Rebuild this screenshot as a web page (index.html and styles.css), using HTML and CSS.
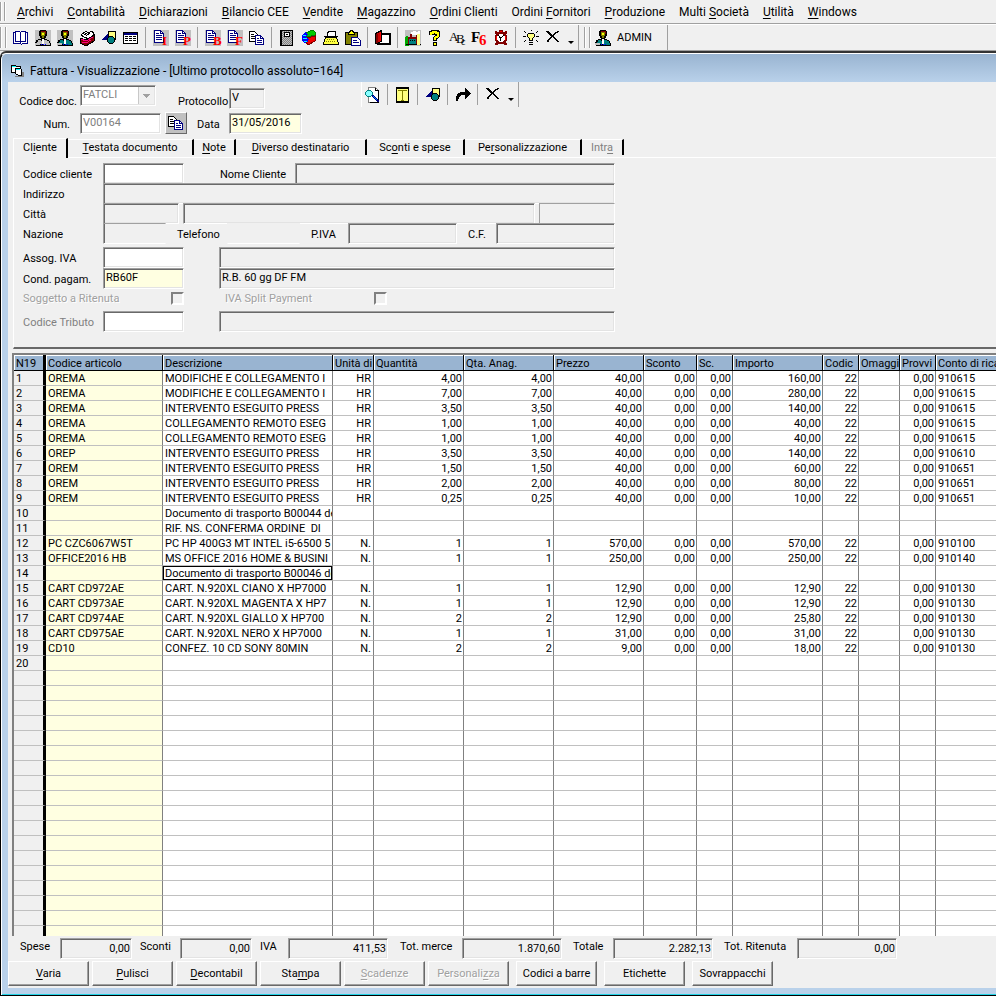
FILE: index.html
```html
<!DOCTYPE html>
<html lang="it">
<head>
<meta charset="utf-8">
<title>Fattura - Visualizzazione</title>
<link rel="stylesheet" href="styles.css">
</head>
<body>
<svg class="defs" aria-hidden="true">
  <defs>
    <pattern id="greydots" width="2" height="2" patternUnits="userSpaceOnUse"><path fill="#c0c0c0" d="M0 0h2v2H0z"/><path fill="#808080" d="M0 0h1v1H0zM1 1h1v1H1z"/></pattern>
    <symbol id="user" viewBox="0 0 16 16">
      <path fill="#000" d="M5 0h6v1h1v5h-1v2h-1v1h2v1h2v1h1v2h1v3H1v-1H0v-3h1v-2h2V9h3V8H5V6H4V1h1z"/>
      <path fill="#808000" d="M6 2h4v4H9v2H7V6H6z"/><path fill="#ff0" d="M7 3h2v2H7z"/><path fill="#800000" d="M6 1h5v1H6zM10 2h1v2h-1z"/>
      <path d="M3 10h3v1h1v3H2v-2h1zM9 10h3v1h2v2h1v2H9z"/><path fill="#fff" d="M7 9h2v5H7z"/>
      <path fill="#c0c0c0" d="M0 13h5v2H0z"/><path fill="#00f" d="M6 14h1v1H6zM8 14h1v1H8zM10 14h1v1h-1z"/>
    </symbol>
    <symbol id="sheet" viewBox="0 0 16 16">
      <path fill="#c0c0c0" d="M0 0h16v16H0z"/><path fill="#fff" stroke="#000080" d="M1.500 .5h6l3 3v9h-9z"/><path fill="none" stroke="#000080" d="M7.500 .5v3h3M3 3.500h3M3 5.500h6M3 7.500h6M3 9.500h6"/>
    </symbol>
    <symbol id="copy" viewBox="0 0 16 16">
      <path fill="#fff" stroke="#000" d="M.5 1.500h5l3 3v7h-8z"/><path stroke="#000" fill="none" d="M2 4.500h3M2 6.500h5M2 8.500h5"/>
      <path fill="#fff" stroke="#000080" d="M6.500 5.500h5l3 3v6h-8z"/><path fill="none" stroke="#000080" d="M11.500 5.500v3h3M8 8.500h2M8 10.500h5M8 12.500h5"/>
    </symbol>
    <symbol id="shapes" viewBox="0 0 16 16">
      <path fill="#ffff80" stroke="#000" d="M7.500 1.500h7v8h-7z"/><path fill="#000080" d="M0 10l1-1h1V8h1V7h1V6h1V5h1V4h1v6z"/><path fill="#000" d="M8 6h4v1h1v1h1v4h-1v1h-1v1H8v-1H7v-1H6V8h1V7h1z"/><path fill="#008080" d="M8 7h4v1h1v4h-1v1H8v-1H7V8h1z"/>
    </symbol>
    <symbol id="cross" viewBox="0 0 16 16"><path fill="#000" d="M1 1h3v1h1v1h1v1h1v1h1V4h1V3h1V2h2V1h2v1h-1v1h-2v1h-1v1H9v2h1v1h1v1h1v1h1v1h1v1h-2v-1h-1v-1h-1V9H9V8H8V7H7v1H6v1H5v1H4v2H2v-2h1V9h1V8h1V7h1V6H5V5H4V4H3V3H2V2H1z"/></symbol>
  </defs>
</svg>
<header>
  <nav class="menu">
    <i class="grip"></i>
    <a href="#"><u>A</u>rchivi</a><a href="#"><u>C</u>ontabilità</a><a href="#"><u>D</u>ichiarazioni</a><a href="#"><u>B</u>ilancio CEE</a><a href="#"><u>V</u>endite</a><a href="#"><u>M</u>agazzino</a><a href="#"><u>O</u>rdini Clienti</a><a href="#">Ordini <u>F</u>ornitori</a><a href="#"><u>P</u>roduzione</a><a href="#">Multi <u>S</u>ocietà</a><a href="#"><u>U</u>tilità</a><a href="#"><u>W</u>indows</a>
  </nav>
  <div class="toolbar">
    <i class="grip"></i>
    <button aria-label="Libro"><svg viewBox="0 0 16 16"><path fill="#fff" stroke="#000080" d="M.5 2.500h2v-1h4l1 1 1-1h4v1h2v11h-5l-1 1-1-1h-7zM7.500 3v10"/><path fill="none" stroke="#000080" d="M2.500 3v8h4l1 1 1-1h4V3"/></svg></button>
    <button aria-label="Clienti"><svg class="boxed grey"><use href="#user"/></svg></button>
    <button aria-label="Fornitori"><svg class="boxed teal"><use href="#user"/></svg></button>
    <button aria-label="Schedario"><svg viewBox="0 0 16 16"><path fill="#fff" stroke="#000" d="M2 5 7 1l2 2 4-2 2 3-5 5-5-2z"/><path fill="#800000" stroke="#000" d="M1 8l6 2 8-5v6l-8 5-6-3z"/><path fill="none" stroke="#ff0080" d="M2 9l5 2 7-4M3 12l4 1 5-3"/><path fill="none" stroke="#000" d="M5 5l3-2M7 6l4-3"/></svg></button>
    <button aria-label="Forme"><svg><use href="#shapes"/></svg></button>
    <button aria-label="Tabella"><svg viewBox="0 0 16 16"><path fill="#fff" stroke="#000" d="M.5 2.500h14v11H.5z"/><path fill="#000080" d="M1 3h13v2H1z"/><path stroke="#000" stroke-dasharray="3 1" d="M2 6.500h12M2 8.500h12M2 10.500h12"/></svg></button>
    <i class="sep"></i>
    <button aria-label="Documento I"><svg viewBox="0 0 16 16"><use href="#sheet"/><text x="9" y="15">I</text></svg></button>
    <button aria-label="Documento P"><svg viewBox="0 0 16 16"><use href="#sheet"/><text x="8" y="15">P</text></svg></button>
    <i class="sep"></i>
    <button aria-label="Documento B"><svg viewBox="0 0 16 16"><use href="#sheet"/><text x="8" y="15">B</text></svg></button>
    <button aria-label="Documento F"><svg viewBox="0 0 16 16"><use href="#sheet"/><text x="8" y="15">F</text></svg></button>
    <button aria-label="Copia"><svg><use href="#copy"/></svg></button>
    <i class="sep"></i>
    <button aria-label="Archivio"><svg viewBox="0 0 16 16"><path fill="url(#greydots)" stroke="#000" d="M1.500 .5h12v15h-12z"/><path fill="#000" d="M2 1h1v14H2z"/><path fill="#fff" stroke="#000" d="M5.500 2.500h5v4h-5z"/><path fill="#000" d="M7 4h2v1H7z"/></svg></button>
    <button aria-label="Libri"><svg viewBox="0 0 16 16"><path fill="#0c0" stroke="#008000" d="M4 3l8-3 2 2v3l-8 2z"/><path fill="#e00" stroke="#800000" d="M6 8l8-2v5l-7 4-2-3z"/><path fill="#00f" d="M1 5l3-3 3 2-2 3 3 2-1 3-4 1-2-3z"/><path fill="none" stroke="#0ff" d="M2 6l3-1M2 9l4-1M3 12l3-1"/></svg></button>
    <button aria-label="Macchina da scrivere"><svg viewBox="0 0 16 16"><path fill="#fff" stroke="#000" d="M4.500 6.500v-4h1v-1h7v5z"/><path fill="#ff4" stroke="#000" d="M2.500 7.500h11l2 6v1H.5v-1z"/><path fill="none" stroke="#000" d="M1 6.500h14"/><path stroke="#808000" stroke-dasharray="1 1" d="M4 9.500h8M3 11.500h10"/></svg></button>
    <button aria-label="Incolla"><svg viewBox="0 0 16 16"><path fill="#808000" stroke="#000" d="M.5 2.500h12v12H.5z"/><path fill="#ff0" stroke="#000" d="M3.500 4.500v-2h1l1-2h2l1 2h1v2z"/><path fill="#fff" stroke="#000080" d="M6.500 7.500h6l3 3v5h-9z"/><path stroke="#000080" d="M8 10.500h4M8 12.500h6"/></svg></button>
    <i class="sep"></i>
    <button aria-label="Esci"><svg viewBox="0 0 16 16"><path fill="#fff" stroke="#000" stroke-width="2" d="M3 4h12v10H3z"/><path fill="#c00" stroke="#000" d="M.5 3.500l6-3v11l-6 2z"/><path fill="#800000" d="M1 4h2v9H1z"/><path fill="#f00" d="M5 2h1v9H5z"/></svg></button>
    <i class="sep"></i>
    <button aria-label="Fabbrica"><svg viewBox="0 0 16 16"><path fill="#c0c0c0" d="M0 0h16v16H0z"/><path fill="#fff" d="M6 2h2V1h3v1h2V1h2v3h-3v1H6z"/><path fill="#0a0" d="M0 7h1V6h2v2h1v8H0z"/><path fill="#800000" d="M3 7h2V4h2v3h4V5h2v9H3z"/><path fill="#008080" d="M4 9h7v5H4z"/><path fill="#000" d="M5 10h1v1H5zM7 10h1v1H7zM9 10h1v1H9zM1 14h15v1H1z"/><path fill="#ff8" d="M12 4h3v11h-3z"/></svg></button>
    <button aria-label="Aiuto"><svg viewBox="0 0 16 16"><path fill="none" stroke="#000" stroke-width="4" d="M4 5V3h2V2h4v1h1v3L8 8v3"/><path fill="none" stroke="#ff0" stroke-width="2" d="M4 5V3h2V2h3v1h2v3L8 8v2"/><path fill="#ff0" stroke="#000" d="M6.500 12.500h3v3h-3z"/></svg></button>
    <button aria-label="Caratteri"><svg viewBox="0 0 16 16"><text class="ink" x="0" y="11">A</text><text class="ink" x="7" y="13">B</text><text class="ink small" x="12" y="15">c</text></svg></button>
    <button aria-label="F6"><svg viewBox="0 0 16 16"><text class="ink big" x="0" y="12">F</text><text class="big" x="8" y="15">6</text></svg></button>
    <button aria-label="Sveglia"><svg viewBox="0 0 16 16"><path fill="#800000" d="M6 0h4v2h2V1h2v3h-1v1h1v6h-1v2h1v2h-3v-1H5v1H2v-2h1v-2H2V5h1V4H2V1h2v1h2z"/><path fill="#fff" d="M6 4h4v1h1v1h1v4h-1v1h-1v1H6v-1H5v-1H4V6h1V5h1z"/><path fill="#f00" d="M7 1h2v1H7zM3 6h1v4H3zM12 6h1v4h-1z"/><path fill="#000" d="M5 5h1v1h1v1h2V6h1V5h1v1h-1v1H9v1H8v3H7V8H6V6H5z"/></svg></button>
    <i class="sep"></i>
    <button aria-label="Suggerimento"><svg viewBox="0 0 16 16"><path fill="#ffff80" stroke="#000" d="M6.500 10.500v-2l-2-2v-2l2-1.500h3l2 1.500v2l-2 2v2z"/><path stroke="#000" fill="none" d="M6 12.500h4M6 14.500h4M0 6.500h3M13 6.500h3M1 1l2 2M15 1l-2 2M1 12l2-2M15 12l-2-2M8 0v1"/></svg></button>
    <button aria-label="Chiudi"><svg><use href="#cross"/></svg></button>
    <button class="more" aria-label="Altro"></button>
    <i class="bar"></i><i class="grip"></i>
    <button class="admin"><svg class="teal"><use href="#user"/></svg>ADMIN</button>
    <i class="bar"></i>
  </div>
</header>
<main class="window">
  <h1 class="title"><svg viewBox="0 0 16 16"><path fill="#808080" d="M5 13h7V9h2v5H5z"/><path fill="#fff" stroke="#000" d="M1.500 2.500h4l1 1h4v7h-3l-2-1h-4z"/><path fill="#0ff" d="M2 3h4v1H2z"/><path fill="#fff" stroke="#000" d="M5.500 5.500h5l1 1v6h-3l-3-2z"/><path fill="#0ff" d="M6 6h4v1H6z"/></svg>Fattura - Visualizzazione - [Ultimo protocollo assoluto=164]</h1>
  <div class="client">
    <section class="head">
      <div class="doc">
        <div class="docrow">
          <label class="lead" for="cod">Codice doc.</label>
          <select id="cod" class="field" disabled><option>FATCLI</option></select>
          <label class="mid" for="prot">Protocollo</label>
          <input id="prot" class="field short" value="V" readonly>
        </div>
        <div class="docrow second-row">
          <label class="lead num" for="num">Num.</label>
          <input id="num" class="field dim white" value="V00164" readonly>
          <button class="copy" aria-label="Copia numero"><svg><use href="#copy"/></svg></button>
          <label class="date" for="data">Data</label>
          <input id="data" class="field day yellow" value="31/05/2016">
        </div>
      </div>
      <div class="tools">
        <button aria-label="Anteprima"><svg viewBox="0 0 16 16"><path fill="#fff" stroke="#808080" d="M3.500 .5h7l3 3v12h-10z"/><path fill="none" stroke="#000" d="M10.500 .5v3h3v12h-9"/><path fill="#008080" d="M2 3h4v1h1v1h1v3H7v1H6v1H2V9H1V8H0V5h1V4h1z"/><path fill="#8ff" d="M2 4h4v1h1v3H6v1H2V8H1V5h1z"/><path fill="#000080" d="M7 8h2v1h1v1h1v1h1v1h1v1h1v2h-2v-1h-1v-1h-1v-1H9v-1H8v-1H7z"/><path fill="#08f" d="M8 9h1v1h1v1h1v1h1v1h-1v-1h-1v-1H9v-1H8z"/></svg></button><i class="sep"></i>
        <button aria-label="Scheda"><svg viewBox="0 0 16 16"><path fill="#ffff80" stroke="#000" d="M1.500 .5h12v15h-12z"/><path fill="none" stroke="#808000" d="M3 3.500h9M7.500 4v9M6 13.500h3"/><path stroke="#000" d="M1 1.500h13M1 14.500h13"/></svg></button><i class="sep"></i>
        <button aria-label="Forme"><svg><use href="#shapes"/></svg></button><i class="sep"></i>
        <button aria-label="Inoltra"><svg viewBox="0 0 16 16"><path fill="#000" d="M1 14V9h1V7h1V6h2V5h5V1h1v1h1v1h1v1h1v1h1v1h1v1h-1v1h-1v1h-1v1h-1v1h-1v1h-1V8H6v1H5v1H4v2H3v2z"/></svg></button><i class="sep"></i>
        <button aria-label="Elimina"><svg><use href="#cross"/></svg></button>
        <button class="more" aria-label="Altro"></button>
      </div>
    </section>
    <div class="tabs" role="tablist">
      <button role="tab" aria-selected="true">Cl<u>i</u>ente</button><button role="tab"><u>T</u>estata documento</button><button role="tab"><u>N</u>ote</button><button role="tab"><u>D</u>iverso destinatario</button><button role="tab">Sc<u>o</u>nti e spese</button><button role="tab">Pe<u>r</u>sonalizzazione</button><button role="tab" disabled>Intr<u>a</u></button>
    </div>
    <section class="panel">
      <div class="row name"><label for="cc">Codice cliente</label><input id="cc" class="field white"><label class="second" for="nc">Nome Cliente</label><input id="nc" class="field" readonly></div>
      <div class="row wide"><label for="ind">Indirizzo</label><input id="ind" class="field" readonly></div>
      <div class="row city"><label for="cap">Città</label><input id="cap" class="field" readonly><input class="field" aria-label="Nome città" readonly><input class="field thin" aria-label="Provincia" readonly></div>
      <div class="row nation"><label for="naz">Nazione</label><input id="naz" class="field open" readonly><label for="tel">Telefono</label><input id="tel" class="field flat" readonly><label for="piva">P.IVA</label><input id="piva" class="field" readonly><label for="cf">C.F.</label><input id="cf" class="field" readonly></div>
      <div class="row pair apart"><label for="iva">Assog. IVA</label><input id="iva" class="field white"><input class="field" aria-label="Descrizione IVA" readonly></div>
      <div class="row pair"><label for="pag">Cond. pagam.</label><input id="pag" class="field yellow" value="RB60F"><input class="field" aria-label="Descrizione pagamento" value="R.B. 60 gg DF FM" readonly></div>
      <div class="row checks"><label for="rit">Soggetto a Ritenuta</label><input id="rit" type="checkbox" disabled><label for="split">IVA Split Payment</label><input id="split" type="checkbox" disabled></div>
      <div class="row pair"><label class="dim" for="trib">Codice Tributo</label><input id="trib" class="field white"><input class="field" aria-label="Descrizione tributo" readonly></div>
    </section>
    <div class="grid">
      <table>
        <colgroup><col class="c-num"><col class="c-code"><col class="c-desc"><col class="c-unit"><col class="c-val"><col class="c-val"><col class="c-val"><col class="c-disc"><col class="c-small"><col class="c-val"><col class="c-small"><col class="c-unit"><col class="c-small"><col></colgroup>
        <thead><tr><th>N19</th><th>Codice articolo</th><th>Descrizione</th><th>Unità di</th><th>Quantità</th><th>Qta. Anag.</th><th>Prezzo</th><th>Sconto</th><th>Sc.</th><th>Importo</th><th>Codic</th><th>Omaggi</th><th>Provvi</th><th>Conto di rica</th></tr></thead>
        <tbody id="rows"></tbody>
      </table>
    </div>
    <section class="totals">
      <label for="t1">Spese</label><input id="t1" class="field" value="0,00" readonly>
      <label for="t2">Sconti</label><input id="t2" class="field" value="0,00" readonly>
      <label for="t3">IVA</label><input id="t3" class="field" value="411,53" readonly>
      <label for="t4">Tot. merce</label><input id="t4" class="field" value="1.870,60" readonly>
      <label for="t5">Totale</label><input id="t5" class="field" value="2.282,13" readonly>
      <label for="t6">Tot. Ritenuta</label><input id="t6" class="field" value="0,00" readonly>
    </section>
    <footer class="actions">
      <div><button><u>V</u>aria</button><button><u>P</u>ulisci</button><button><u>D</u>econtabil</button><button>Sta<u>m</u>pa</button><button disabled><u>S</u>cadenze</button><button disabled>Personali<u>z</u>za</button></div>
      <button>Codici a barre</button><button>Etichette</button><button>Sovrappacchi</button>
    </footer>
  </div>
</main>
<script src="script.js"></script>
</body>
</html>
```
FILE: styles.css
```css
* { box-sizing: border-box; }
body {
  margin: 0;
  height: 100vh;
  display: flex;
  flex-direction: column;
  overflow: hidden;
  background: #f0f0f0;
  color: #000;
  font: 11px/14px Roboto, "Liberation Sans", sans-serif;
}
button, input, select { font: inherit; color: inherit; margin: 0; padding: 0; border-radius: 0; min-width: 0; }
button { border: 0; background: none; }
svg { width: 16px; height: 16px; display: block; flex: none; overflow: visible; shape-rendering: crispEdges; }
.defs { position: absolute; width: 0; height: 0; overflow: hidden; }
svg text { font: bold 13px "Liberation Serif", serif; fill: #f00; }
svg .ink { fill: #000; font-weight: normal; }
svg .small { font-size: 10px; }
svg .big { font-size: 15px; font-weight: bold; }
svg.grey { fill: #c0c0c0; }
svg.teal { fill: #008080; }
svg.boxed { background: #c0c0c0; }
u { text-underline-offset: 2px; }

.menu {
  display: flex;
  align-items: center;
  gap: 14px;
  height: 24px;
  border-bottom: 1px solid #a0a0a0;
  font-size: 12px;
}
.menu a { color: #000; text-decoration: none; white-space: nowrap; }
.grip { flex: none; width: 6px; align-self: stretch; margin: 2px 0; border: 1px solid #a0a0a0; border-width: 0 1px; box-shadow: inset 1px 0 #fff, 1px 0 #fff; }
.menu .grip { width: 5px; margin-right: -2px; }
.toolbar {
  display: flex;
  align-items: center;
  height: 27px;
  border-top: 1px solid #fff;
  border-bottom: 1px solid #a0a0a0;
}
.toolbar > button { width: 22px; height: 24px; display: flex; align-items: center; justify-content: center; flex: none; }
.toolbar > .grip:first-child { margin-right: 4px; }
.sep { flex: none; width: 8px; align-self: stretch; margin: 2px 0; background: linear-gradient(#a0a0a0, #a0a0a0) 3px 0 / 1px 100% no-repeat; }
.bar { flex: none; width: 1px; align-self: stretch; background: #a0a0a0; }
.toolbar > .bar + .grip { margin-left: 5px; }
.toolbar > .more, .tools .more { width: 14px; align-self: flex-end; height: 16px; display: flex; align-items: center; justify-content: center; }
.more::before { content: ""; border: 3px solid transparent; border-top-color: #000; border-bottom: 0; }
.toolbar > .admin { width: 77px; gap: 6px; justify-content: flex-start; padding-left: 5px; }

.window {
  flex: 1;
  min-height: 0;
  display: flex;
  flex-direction: column;
  margin-top: 2px;
  border-left: 1px solid #000;
  border-bottom: 1px solid #000;
  border-top: 1px solid #fff;
  border-top-left-radius: 6px;
  background: #b9d1ea;
  box-shadow: 0 -2px #333, inset 1px 0 #fff, inset 0 -1px #22d3e6;
}
.title {
  display: flex;
  align-items: center;
  gap: 4px;
  height: 28px;
  margin: 0 0 0 1px;
  padding: 6px 0 0 8px;
  background: linear-gradient(#99b4d1, #b9d1ea);
  border-top-left-radius: 5px;
  font-size: 12px;
  font-weight: normal;
}
.client { flex: 1; min-height: 0; display: flex; flex-direction: column; margin: 0 0 7px 7px; background: #f0f0f0; }

.field {
  width: 100%;
  height: 21px;
  padding: 0 2px 2px;
  border: 1px solid;
  border-color: #a0a0a0 #fff #fff #a0a0a0;
  box-shadow: inset 1px 1px #696969, inset -1px -1px #e3e3e3;
  background: #f0f0f0;
  outline: 0;
}
.white { background: #fff; }
.yellow { background: #ffffe1; }
.dim { color: #808080; }
.head { display: flex; align-items: flex-start; height: 55px; }
.doc { width: 353px; }
.docrow { display: flex; align-items: flex-end; height: 27px; }
.docrow.second-row { height: 25px; }
.second-row label { padding-bottom: 2px; }
.lead { width: 72px; padding-right: 3px; text-align: right; }
.lead.num { padding-right: 10px; }
.mid { width: 73px; padding-left: 22px; }
select.field { width: 76px; margin-bottom: 3px; appearance: none; color: #808080; opacity: 1; background: linear-gradient(45deg, transparent 50%, #a0a0a0 50%) 62px 8px / 4px 4px no-repeat, linear-gradient(-45deg, transparent 50%, #a0a0a0 50%) 66px 8px / 4px 4px no-repeat, linear-gradient(90deg, #fff 57px, #a0a0a0 57px, #f0f0f0 58px, #f0f0f0 73px, #a0a0a0 73px); }
.field.short { width: 36px; }
#num { width: 81px; }
.copy { width: 22px; height: 22px; margin-left: 4px; padding: 2px; border: 1px solid; border-color: #fff #696969 #696969 #fff; background: #c0c0c0; }
.date { width: 42px; padding-left: 10px; }
.field.day { width: 73px; }
.tools { display: flex; align-items: center; height: 25px; border-left: 1px solid #fff; border-right: 1px solid #a0a0a0; }
.tools button { width: 22px; display: flex; justify-content: center; }

.tabs { display: grid; grid-template-columns: 55px 126px 42px 131px 98px 117px 42px; height: 20px; margin-left: 5px; }
.tabs button { margin: 2px 0 2px; border-top: 1px solid #fff; border-right: 2px solid #000; white-space: nowrap; }
.tabs button:first-child { margin: 1px 0 -1px; padding-bottom: 2px; border-left: 1px solid #fff; background: #f0f0f0; z-index: 1; }
.tabs button:disabled { color: #808080; }
.panel { height: 192px; margin-left: 5px; padding: 5px 0 0 9px; border-top: 1px solid #fff; border-left: 1px solid #fff; border-bottom: 2px solid #696969; }
.row { display: grid; height: 20px; align-items: center; justify-content: start; }
.row label { white-space: nowrap; padding-top: 2px; }
.row .field { align-self: start; }
.name { grid-template-columns: 80px 81px 111px 320px; }
.name .second { padding-left: 36px; }
.wide { grid-template-columns: 80px 512px; }
.city { grid-template-columns: 76px 76px 352px 76px; column-gap: 4px; }
.nation { grid-template-columns: 80px 63px 61px 73px 48px 109px 39px 119px; }
.nation .field + label { padding-left: 11px; }
.apart { margin-top: 4px; }
.pair { grid-template-columns: 80px 81px 35px 396px; }
.pair, .checks { height: 21px; }
.pair .field:last-child { grid-column: 4; }
.field.thin { box-shadow: none; }
.field.open { border-right-color: transparent; box-shadow: inset 1px 0 #696969; }
.field.flat { border-color: transparent transparent #fff; box-shadow: none; }
.checks { grid-template-columns: 148px 54px 149px 13px; height: 22px; align-items: start; padding-top: 3px; color: #a0a0a0; text-shadow: 1px 1px #fff; }
.checks label { padding: 0; }
input[type="checkbox"] { appearance: none; width: 13px; height: 13px; border: 2px solid; border-color: #808080 #fff #fff #808080; background: #f0f0f0; }

.grid { flex: 1; min-height: 0; overflow: hidden; margin: 4px 0 0 4px; border-top: 2px solid #808080; border-left: 2px solid #808080; background: #fff; }
table { width: 100%; table-layout: fixed; border-collapse: separate; border-spacing: 0; }
.c-num { width: 32px; }
.c-code { width: 117px; }
.c-desc { width: 170px; }
.c-unit { width: 41px; }
.c-val { width: 90px; }
.c-disc { width: 53px; }
.c-small { width: 36px; }
th, td { height: 15px; padding: 2px 1px 0 2px; overflow: hidden; white-space: pre; line-height: 12px; }
th { height: 16px; text-align: left; font-weight: normal; background: #99b4d1; border-right: 1px solid #000; border-bottom: 1px solid #000; box-shadow: inset 1px 1px #fff; }
td { border-right: 1px solid #808080; border-bottom: 1px solid #c0c0c0; text-align: right; }
td:nth-child(-n+3), td:last-child { text-align: left; }
td:nth-child(3) { padding-right: 0; }
td:nth-child(4) { padding-right: 2px; }
th:last-child, td:last-child { padding-right: 0; border-right: 0; }
td:first-child { background: #f0f0f0; }
th:first-child, td:first-child { border-right: 3px solid #000; }
td:nth-child(2) { background: #ffffe1; }
td.current { box-shadow: inset 0 0 0 1px #000; }

.totals { display: grid; grid-template-columns: 52px 72px 48px 72px 36px 100px 74px 100px 51px 100px 84px 100px; height: 25px; align-items: start; padding-top: 2px; }
.totals label { padding: 2px 0 0 12px; white-space: nowrap; }
.totals label:nth-of-type(2), .totals label:nth-of-type(3) { padding-left: 8px; }
.totals label:nth-of-type(5), .totals label:nth-of-type(6) { padding-left: 11px; }
.totals .field { text-align: right; padding: 0 1px; }
.actions { display: flex; gap: 7px; height: 27px; }
.actions div { display: flex; gap: 3px; }
.actions button { width: 81px; height: 25px; border: 1px solid; border-color: #fff #696969 #696969 #fff; box-shadow: inset -1px -1px #a0a0a0; }
.actions button:disabled { color: #a0a0a0; text-shadow: 1px 1px #fff; }
```
FILE: script.js
```js
// code | description | unit | quantity | price | amount | account
const items = [
  "OREMA|MODIFICHE E COLLEGAMENTO I|HR|4,00|40,00|160,00|910615",
  "OREMA|MODIFICHE E COLLEGAMENTO I|HR|7,00|40,00|280,00|910615",
  "OREMA|INTERVENTO ESEGUITO PRESS|HR|3,50|40,00|140,00|910615",
  "OREMA|COLLEGAMENTO REMOTO ESEG|HR|1,00|40,00|40,00|910615",
  "OREMA|COLLEGAMENTO REMOTO ESEG|HR|1,00|40,00|40,00|910615",
  "OREP|INTERVENTO ESEGUITO PRESS|HR|3,50|40,00|140,00|910610",
  "OREM|INTERVENTO ESEGUITO PRESS|HR|1,50|40,00|60,00|910651",
  "OREM|INTERVENTO ESEGUITO PRESS|HR|2,00|40,00|80,00|910651",
  "OREM|INTERVENTO ESEGUITO PRESS|HR|0,25|40,00|10,00|910651",
  "|Documento di trasporto B00044 de",
  "|RIF. NS. CONFERMA ORDINE  DI",
  "PC CZC6067W5T|PC HP 400G3 MT INTEL i5-6500 5|N.|1|570,00|570,00|910100",
  "OFFICE2016 HB|MS OFFICE 2016 HOME & BUSINI|N.|1|250,00|250,00|910140",
  "|Documento di trasporto B00046 de",
  "CART CD972AE|CART. N.920XL CIANO X HP7000|N.|1|12,90|12,90|910130",
  "CART CD973AE|CART. N.920XL MAGENTA X HP7|N.|1|12,90|12,90|910130",
  "CART CD974AE|CART. N.920XL GIALLO X HP700|N.|2|12,90|25,80|910130",
  "CART CD975AE|CART. N.920XL NERO X HP7000|N.|1|31,00|31,00|910130",
  "CD10|CONFEZ. 10 CD SONY 80MIN|N.|2|9,00|18,00|910130"
];
const body = document.getElementById("rows");
for (let i = 0; i < 60; i++) {
  const [code = "", desc = "", unit = "", qty = "", price = "", amount = "", account = ""] = (items[i] || "").split("|");
  const zero = unit ? "0,00" : "";
  const cells = [i < 20 ? i + 1 : "", code, desc, unit, qty, qty, price, zero, zero, amount, unit ? "22" : "", "", zero, account];
  const row = body.insertRow();
  cells.forEach(value => { row.insertCell().textContent = value; });
  if (i === 13) row.cells[2].className = "current";
}
```
